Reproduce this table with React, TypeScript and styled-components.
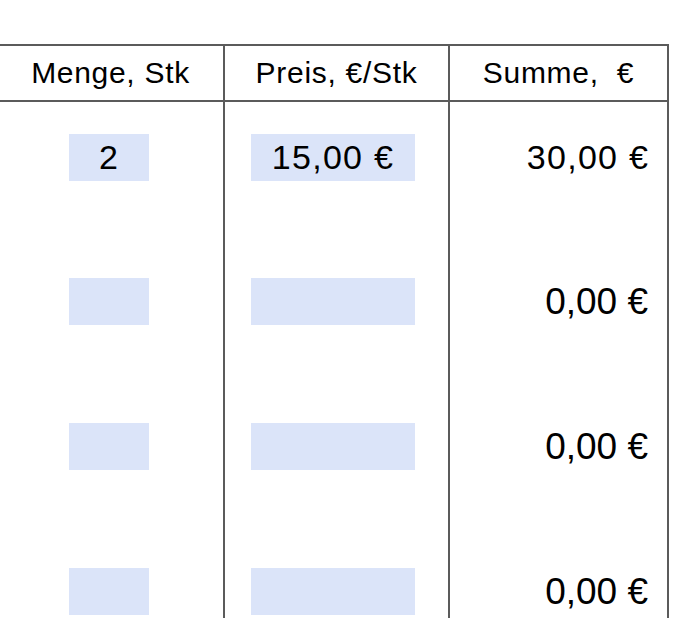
import React from "react";
import styled, { createGlobalStyle } from "styled-components";

const GlobalStyle = createGlobalStyle`
  html, body {
    margin: 0;
    padding: 0;
    background: #ffffff;
  }
  body {
    font-family: "Liberation Sans", Arial, sans-serif;
    color: #000;
  }
`;

const Page = styled.div`
  width: 697px;
  height: 618px;
  overflow: hidden;
  padding-top: 44px;
  box-sizing: border-box;
`;

const Table = styled.div`
  display: grid;
  grid-template-columns: 227px 225px 219px;
  width: max-content;
  margin-left: -4px;
  border-top: 2px solid #5b5b5b;
  border-left: 2px solid #5b5b5b;
`;

const HeaderCell = styled.div`
  height: 54px;
  display: flex;
  align-items: center;
  justify-content: center;
  border-right: 2px solid #5b5b5b;
  border-bottom: 2px solid #5b5b5b;
  font-size: 30px;
  letter-spacing: 0.7px;
  white-space: pre;
`;

const BodyCell = styled.div<{ $align: "start" | "end"; $inset: number; $first?: boolean }>`
  height: 145px;
  box-sizing: border-box;
  padding-top: ${(p) => (p.$first ? 32 : 31)}px;
  display: flex;
  align-items: flex-start;
  justify-content: ${(p) => (p.$align === "start" ? "flex-start" : "flex-end")};
  padding-left: ${(p) => (p.$align === "start" ? p.$inset : 0)}px;
  padding-right: ${(p) => (p.$align === "end" ? p.$inset : 0)}px;
  border-right: 2px solid #5b5b5b;
`;

const InputBox = styled.div<{ $width: number }>`
  width: ${(p) => p.$width}px;
  height: 47px;
  background: #dbe4f9;
  display: flex;
  align-items: center;
  justify-content: center;
  font-size: 34px;
  letter-spacing: 1.3px;
  line-height: 47px;
  white-space: pre;
`;

const Total = styled.div<{ $filled?: boolean }>`
  height: 47px;
  line-height: 47px;
  font-size: ${(p) => (p.$filled ? 34 : 37)}px;
  letter-spacing: ${(p) => (p.$filled ? 1.3 : 0)}px;
  margin-right: ${(p) => (p.$filled ? -1.3 : 0)}px;
  white-space: pre;
`;

const rows = [
  { qty: "2", price: "15,00 €", sum: "30,00 €" },
  { qty: "", price: "", sum: "0,00 €" },
  { qty: "", price: "", sum: "0,00 €" },
  { qty: "", price: "", sum: "0,00 €" },
];

export default function App() {
  return (
    <>
      <GlobalStyle />
      <Page>
        <Table>
          <HeaderCell>Menge, Stk</HeaderCell>
          <HeaderCell>Preis, €/Stk</HeaderCell>
          <HeaderCell>Summe,  €</HeaderCell>
          {rows.map((r, i) => (
            <React.Fragment key={i}>
              <BodyCell $align="start" $inset={71} $first={i === 0}>
                <InputBox $width={80}>{r.qty}</InputBox>
              </BodyCell>
              <BodyCell $align="start" $inset={26} $first={i === 0}>
                <InputBox $width={164}>{r.price}</InputBox>
              </BodyCell>
              <BodyCell $align="end" $inset={19} $first={i === 0}>
                <Total $filled={i === 0}>{r.sum}</Total>
              </BodyCell>
            </React.Fragment>
          ))}
        </Table>
      </Page>
    </>
  );
}
